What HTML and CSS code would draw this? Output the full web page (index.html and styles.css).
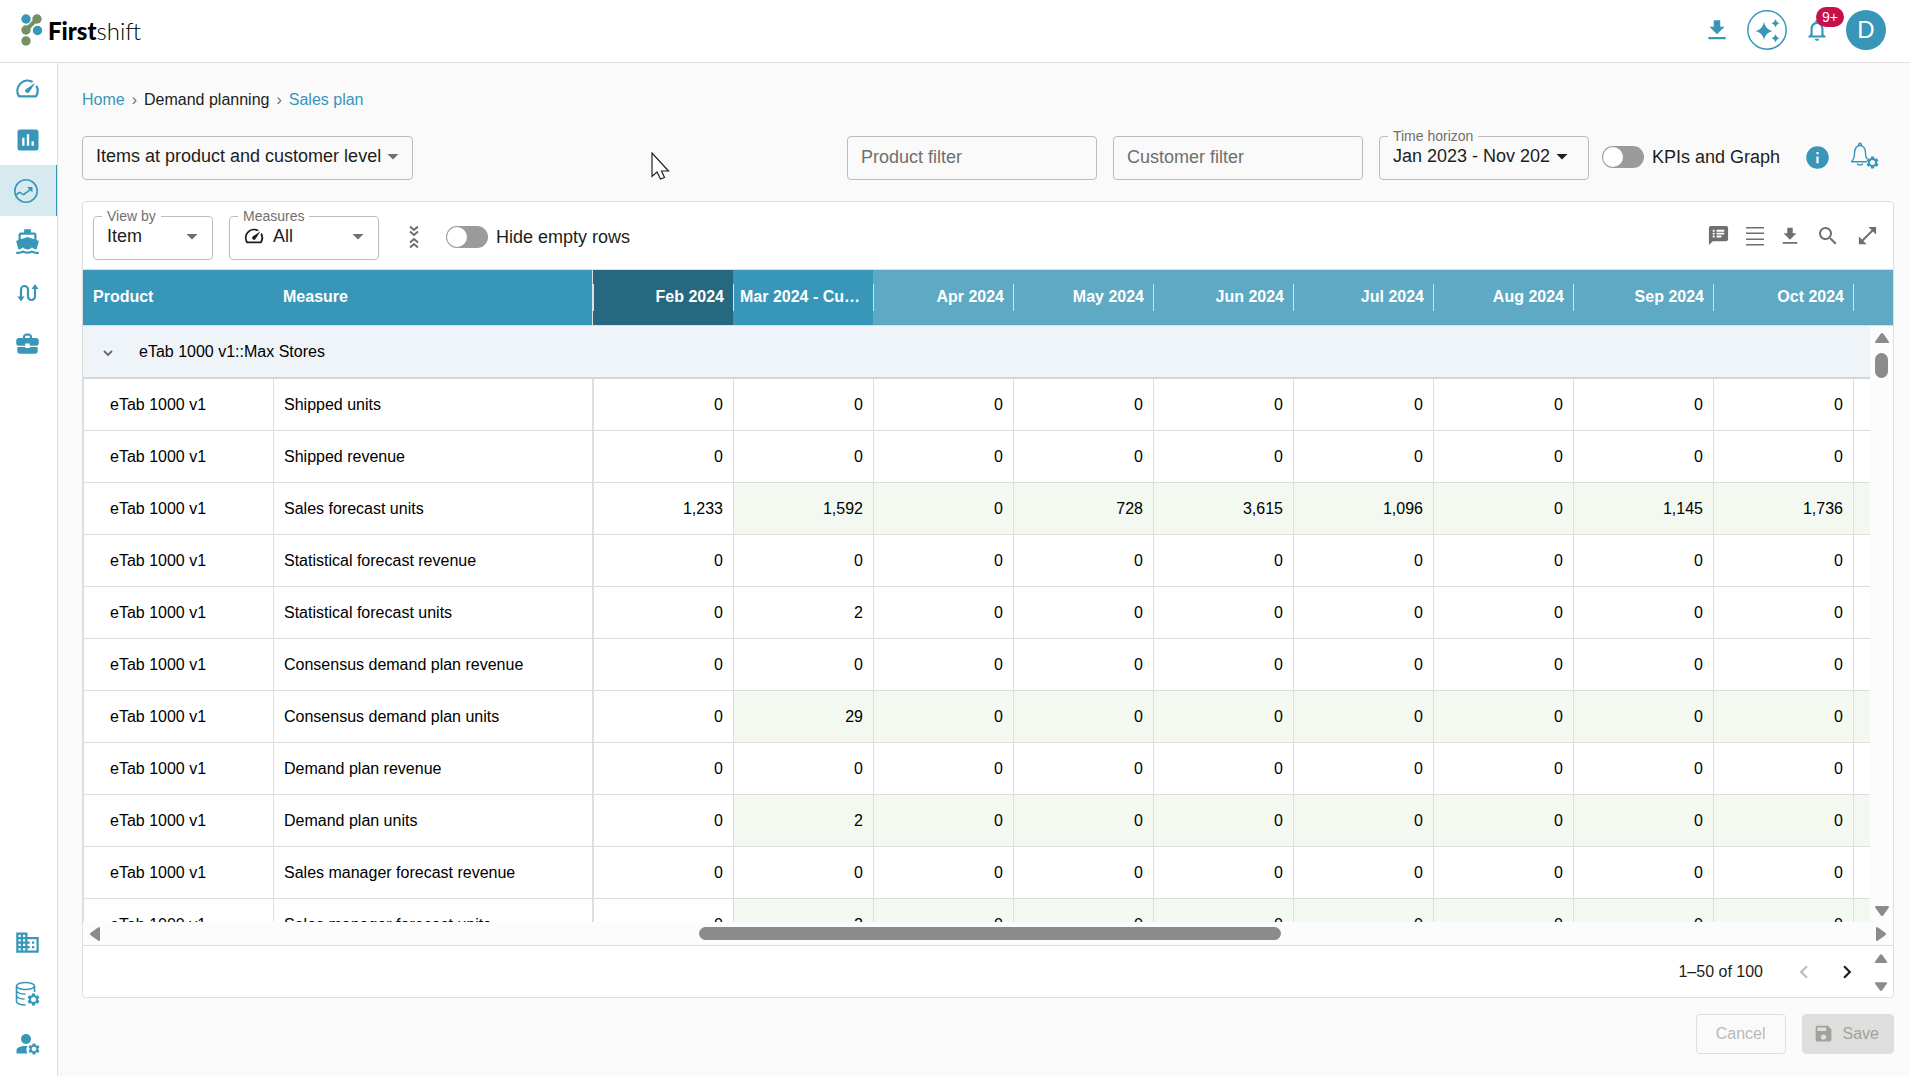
FILE: index.html
```
<!DOCTYPE html>
<html lang="en">
<head>
  <meta charset="UTF-8">
  <title>Firstshift - Sales plan</title>
  <link rel="stylesheet" href="styles.css">
</head>
<body>

  <!-- Shared icons -->
  <svg class="sprite" aria-hidden="true">
    <symbol id="i-speed" viewBox="0 0 24 24"><path d="M20.38 8.57l-1.23 1.85a8 8 0 0 1-.22 7.58H5.07A8 8 0 0 1 15.58 6.85l1.85-1.23A10 10 0 0 0 3.35 19a2 2 0 0 0 1.72 1h13.85a2 2 0 0 0 1.74-1 10 10 0 0 0-.27-10.44zm-9.79 6.84a2 2 0 0 0 2.83 0l5.66-8.49-8.49 5.66a2 2 0 0 0 0 2.83z"/></symbol>
    <symbol id="i-download" viewBox="0 0 24 24"><path d="M19 9h-4V3H9v6H5l7 7 7-7zM4 18.500v2h16v-2H4z"/></symbol>
    <symbol id="i-drop" viewBox="0 0 24 24"><path d="M6.500 10l5.500 5.500 5.500-5.500z"/></symbol>
    <symbol id="i-gear" viewBox="0 0 24 24"><path d="M19.14 12.94c.04-.3.06-.61.06-.94 0-.32-.02-.64-.07-.94l2.03-1.58c.18-.14.23-.41.12-.61l-1.92-3.32c-.12-.22-.37-.29-.59-.22l-2.39.96c-.5-.38-1.03-.7-1.62-.94l-.36-2.540c-.04-.24-.24-.41-.48-.41h-3.84c-.24 0-.43.17-.47.41l-.36 2.540c-.59.24-1.13.57-1.62.94l-2.390-.96c-.22-.08-.47 0-.59.22L2.740 8.870c-.12.21-.08.47.12.61l2.030 1.580c-.05.3-.09.63-.09.94s.02.64.07.94l-2.030 1.580c-.18.14-.23.41-.12.61l1.920 3.320c.12.22.37.29.59.22l2.390-.96c.5.38 1.030.7 1.620.94l.36 2.540c.05.24.24.41.48.41h3.840c.24 0 .44-.17.47-.41l.36-2.540c.59-.24 1.130-.56 1.620-.94l2.390.96c.22.08.47 0 .59-.22l1.920-3.320c.12-.22.07-.47-.12-.61l-2.010-1.580zM12 16a4 4 0 1 1 0-8 4 4 0 0 1 0 8z"/></symbol>
    <symbol id="i-tri" viewBox="0 0 16 12"><path d="M2.500 11Q0 11 1.500 9L6.500 2Q8 0 9.500 2L14.500 9Q16 11 13.500 11z"/></symbol>
  </svg>

  <header class="topbar">
    <a class="logo" href="#" aria-label="Firstshift">
      <svg width="22" height="32" viewBox="0 0 22 32">
        <path d="M5 16L16 5" stroke="#768f63" stroke-width="4"/>
        <circle cx="5" cy="5" r="4.700" fill="#3896b8"/>
        <circle cx="16" cy="5" r="4.700" fill="#768f63"/>
        <circle cx="5" cy="16" r="4.700" fill="#768f63"/>
        <circle cx="16.500" cy="16.500" r="4.700" fill="#3896b8"/>
        <circle cx="5" cy="27" r="4.700" fill="#768f63"/>
      </svg>
      <span class="logo-text"><b>First</b>shift</span>
    </a>
    <div class="top-actions">
      <button class="icon-btn download" aria-label="Downloads"><svg width="26" height="26"><use href="#i-download"/></svg></button>
      <button class="icon-btn ai" aria-label="Assistant">
        <svg width="40" height="40" viewBox="0 0 40 40">
          <circle cx="20" cy="20" r="19.200" fill="none" stroke="currentColor" stroke-width="1.500"/>
          <path d="M17 12q1.500 7.500 8.500 9-7 1.500-8.500 9-1.500-7.500-8.500-9 7-1.500 8.500-9zM28.500 9q.8 3.500 4.300 4.200-3.500.8-4.300 4.300-.8-3.500-4.300-4.300 3.500-.7 4.300-4.200zM28.500 24q.8 3.500 4.300 4.300-3.500.8-4.300 4.200-.8-3.400-4.300-4.200 3.500-.8 4.300-4.300z"/>
        </svg>
      </button>
      <button class="icon-btn bell" aria-label="Notifications">
        <svg width="26" height="26" viewBox="0 0 24 24"><path d="M12 22c1.100 0 2-.9 2-2h-4c0 1.100.9 2 2 2zm6-6v-5c0-3.070-1.630-5.640-4.500-6.320V4c0-.83-.67-1.500-1.500-1.500s-1.500.67-1.500 1.500v.68C7.640 5.360 6 7.920 6 11v5l-2 2v1h16v-1l-2-2zm-2 1H8v-6c0-2.480 1.510-4.500 4-4.500s4 2.020 4 4.500v6z"/></svg>
        <span class="badge">9+</span>
      </button>
      <button class="avatar">D</button>
    </div>
  </header>

  <div class="layout">
    <!-- Side navigation -->
    <nav class="sidebar">
      <a href="#" aria-label="Dashboard"><svg width="27" height="27"><use href="#i-speed"/></svg></a>
      <a href="#" aria-label="Reports"><svg width="28" height="28" viewBox="0 0 24 24"><path d="M19 3H5c-1.100 0-2 .9-2 2v14c0 1.100.9 2 2 2h14c1.100 0 2-.9 2-2V5c0-1.100-.9-2-2-2zM9 17H7v-7h2v7zm4 0h-2V7h2v10zm4 0h-2v-4h2v4z"/></svg></a>
      <a href="#" class="active" aria-label="Demand planning"><svg width="26" height="26" viewBox="0 0 26 26" fill="none" stroke="currentColor" stroke-width="1.600"><circle cx="13" cy="13" r="11.200"/><path d="M3 17.500c2.500-3.500 4-3.500 5.500-2s2.500 1.500 3.500 0 2.500-1 3.500-2.500l3-3.500"/><path d="M14 9h5.500v5.500z" fill="currentColor" stroke="none"/></svg></a>
      <a href="#" aria-label="Supply"><svg width="27" height="27" viewBox="0 0 24 24"><path d="M20 21c-1.390 0-2.780-.47-4-1.320-2.440 1.710-5.560 1.710-8 0C6.780 20.530 5.390 21 4 21H2v2h2c1.380 0 2.740-.35 4-.99 2.520 1.290 5.480 1.290 8 0 1.260.65 2.620.99 4 .99h2v-2h-2zM3.950 19H4c1.600 0 3.020-.88 4-2 .98 1.120 2.400 2 4 2s3.020-.88 4-2c.98 1.120 2.400 2 4 2h.05l1.890-6.680c.08-.26.06-.54-.06-.78s-.34-.42-.6-.5L20 10.620V6c0-1.100-.9-2-2-2h-3V1H9v3H6c-1.100 0-2 .9-2 2v4.620l-1.290.42c-.26.08-.48.26-.6.5s-.15.52-.06.78L3.950 19zM6 6h12v3.970L12 8 6 9.970V6z"/></svg></a>
      <a href="#" aria-label="Flow"><svg width="24" height="20" viewBox="0 0 24 20"><path d="M5 15V6.500a3.500 3.500 0 0 1 7 0v7a3.500 3.500 0 0 0 7 0V5" fill="none" stroke="currentColor" stroke-width="2.200"/><path d="M1.500 13.500h7L5 18.500zM15.500 6h7L19 1z"/></svg></a>
      <a href="#" aria-label="Business"><svg width="27" height="27" viewBox="0 0 24 24"><path d="M10 16v-1H3.010L3 19c0 1.110.89 2 2 2h14c1.110 0 2-.89 2-2v-4h-7v1h-4zm10-9h-4.010V5l-2-2h-4l-2 2v2H4c-1.100 0-2 .9-2 2v3c0 1.110.89 2 2 2h6v-2h4v2h6c1.100 0 2-.9 2-2V9c0-1.100-.9-2-2-2zm-6 0h-4V5h4v2z"/></svg></a>
      <div class="spacer"></div>
      <a href="#" aria-label="Company"><svg width="27" height="27" viewBox="0 0 24 24"><path d="M12 7V3H2v18h20V7H12zM6 19H4v-2h2v2zm0-4H4v-2h2v2zm0-4H4V9h2v2zm0-4H4V5h2v2zm4 12H8v-2h2v2zm0-4H8v-2h2v2zm0-4H8V9h2v2zm0-4H8V5h2v2zm10 12h-8v-2h2v-2h-2v-2h2v-2h-2V9h8v10zm-2-8h-2v2h2v-2zm0 4h-2v2h2v-2z"/></svg></a>
      <a href="#" aria-label="Data settings"><svg width="26" height="26" viewBox="0 0 26 26"><g fill="none" stroke="currentColor" stroke-width="1.600"><ellipse cx="10.500" cy="5" rx="9" ry="3.500"/><path d="M1.500 5v15.500c0 2 4 3.500 9 3.500M19.500 5v6M1.500 10c1 2 5 3 9 3M1.500 15c1 2 4 3 8 3"/></g><use href="#i-gear" x="11" y="11" width="15" height="15"/></svg></a>
      <a href="#" aria-label="User settings"><svg width="26" height="26" viewBox="0 0 26 26"><circle cx="11" cy="7" r="5"/><path d="M1.500 21.500v-3c0-3.500 5-5 11-4.500-1.500 2-1.500 5 0 7.500z"/><use href="#i-gear" x="12" y="10" width="14" height="14"/></svg></a>
    </nav>

    <main class="content">
      <nav class="breadcrumb">
        <a href="#">Home</a><span class="sep">›</span><span>Demand planning</span><span class="sep">›</span><a href="#">Sales plan</a>
      </nav>

      <div class="filters">
        <button class="field level">Items at product and customer level<svg class="caret" width="24" height="24"><use href="#i-drop"/></svg></button>
        <div class="spacer"></div>
        <input class="field filter" type="text" placeholder="Product filter" aria-label="Product filter">
        <input class="field filter" type="text" placeholder="Customer filter" aria-label="Customer filter">
        <fieldset class="field horizon">
          <legend>Time horizon</legend>
          <button><span>Jan 2023 - Nov 202</span><svg width="24" height="24"><use href="#i-drop"/></svg></button>
        </fieldset>
        <label class="switch kpis"><input type="checkbox">KPIs and Graph</label>
        <button class="icon-btn info" aria-label="Info"><svg width="27" height="27" viewBox="0 0 24 24"><path d="M12 2a10 10 0 1 0 0 20 10 10 0 0 0 0-20zm1 15h-2v-6h2v6zm0-8h-2V7h2v2z"/></svg></button>
        <button class="icon-btn alerts" aria-label="Alert settings"><svg width="30" height="28" viewBox="0 0 30 28"><g fill="none" stroke="currentColor" stroke-width="1.400"><path d="M1.500 19.500c2.500-2 3-4 3-8.500 0-4 2-7.500 5.500-7.500s5.500 3.500 5.500 7.500c0 2.500.3 4.500 1.500 6M1 19.800h16M8.500 3.500c0-3 3-3 3 0M7 21.500c1 2 5 2 6 0"/></g><use href="#i-gear" x="15" y="13" width="15" height="15"/></svg></button>
      </div>

      <section class="card">
        <div class="toolbar">
          <fieldset class="field view-by">
            <legend>View by</legend>
            <button>Item<svg class="caret" width="24" height="24"><use href="#i-drop"/></svg></button>
          </fieldset>
          <fieldset class="field measures">
            <legend>Measures</legend>
            <button><svg class="lead" width="22" height="22"><use href="#i-speed"/></svg>All<svg class="caret" width="24" height="24"><use href="#i-drop"/></svg></button>
          </fieldset>
          <button class="icon-btn grey collapse" aria-label="Collapse rows"><svg width="10" height="24" viewBox="0 0 10 24" fill="none" stroke="currentColor" stroke-width="2"><path d="M1 1.500l4 3.500 4-3.500M1 6.500L5 10l4-3.500M1 17.500L5 14l4 3.500M1 22.500L5 19l4 3.500"/></svg></button>
          <label class="switch"><input type="checkbox">Hide empty rows</label>
          <div class="spacer"></div>
          <div class="tools">
            <button class="icon-btn grey" aria-label="Comments"><svg width="23" height="23" viewBox="0 0 24 24"><path d="M20 2H4c-1.100 0-2 .9-2 2v18l4-4h14c1.100 0 2-.9 2-2V4c0-1.100-.9-2-2-2zM8 14H6v-2h2v2zm0-3H6V9h2v2zm0-3H6V6h2v2zm7 6h-5v-2h5v2zm3-3h-8V9h8v2zm0-3h-8V6h8v2z"/></svg></button>
            <button class="icon-btn grey" aria-label="Density"><svg width="18" height="20" viewBox="0 0 18 20"><path d="M0 1h18v1.500H0zM0 6.500h18V8H0zM0 12.500h18V14H0zM0 18h18v1.500H0z"/></svg></button>
            <button class="icon-btn grey" aria-label="Export"><svg width="20" height="22" viewBox="2 0 20 24"><use href="#i-download" width="24" height="24"/></svg></button>
            <button class="icon-btn grey" aria-label="Search"><svg width="24" height="24" viewBox="0 0 24 24"><path d="M15.500 14h-.79l-.28-.27A6.500 6.500 0 1 0 13.730 14.430l.27.28v.79l5 4.990L20.490 19l-4.990-5zm-6 0a4.500 4.500 0 1 1 0-9 4.500 4.500 0 0 1 0 9z"/></svg></button>
            <button class="icon-btn grey" aria-label="Full screen"><svg width="23" height="23" viewBox="0 0 24 24"><path d="M21 11V3h-8l3.290 3.290-10 10L3 13v8h8l-3.290-3.290 10-10z"/></svg></button>
          </div>
        </div>

        <div class="grid-wrap">
          <table class="grid">
            <colgroup>
              <col class="c-product"><col class="c-measure">
              <col span="9" class="c-month"><col>
            </colgroup>
            <thead>
              <tr>
                <th>Product</th>
                <th class="frozen-end">Measure</th>
                <th class="month past">Feb 2024</th>
                <th class="month current">Mar 2024 - Cu…</th>
                <th class="month">Apr 2024</th>
                <th class="month">May 2024</th>
                <th class="month">Jun 2024</th>
                <th class="month">Jul 2024</th>
                <th class="month">Aug 2024</th>
                <th class="month">Sep 2024</th>
                <th class="month">Oct 2024</th>
                <th class="month"></th>
              </tr>
            </thead>
            <tbody id="rows">
              <tr class="group">
                <td colspan="12"><button aria-label="Collapse group"><svg width="10" height="8" viewBox="0 0 10 8"><path d="M1 2l4 4 4-4" fill="none" stroke="#666" stroke-width="1.800"/></svg></button>eTab 1000 v1::Max Stores</td>
              </tr>
            </tbody>
          </table>
          <div class="vscroll">
            <svg width="16" height="12"><use href="#i-tri"/></svg>
            <span class="thumb"></span>
            <svg class="down" width="16" height="12"><use href="#i-tri"/></svg>
          </div>
        </div>

        <div class="hscroll">
          <svg class="left" width="16" height="12"><use href="#i-tri"/></svg>
          <div class="track"><div class="thumb"></div></div>
          <svg class="right" width="16" height="12"><use href="#i-tri"/></svg>
        </div>

        <div class="pager">
          <span class="count">1–50 of 100</span>
          <button class="page-btn" disabled aria-label="Previous page"><svg width="26" height="26" viewBox="0 0 24 24"><path d="M15.410 7.410L14 6l-6 6 6 6 1.410-1.410L10.830 12z"/></svg></button>
          <button class="page-btn" aria-label="Next page"><svg width="26" height="26" viewBox="0 0 24 24"><path d="M10 6L8.590 7.410 13.170 12l-4.580 4.590L10 18l6-6z"/></svg></button>
          <div class="mini-scroll">
            <svg width="14" height="11"><use href="#i-tri"/></svg>
            <svg class="down" width="14" height="11"><use href="#i-tri"/></svg>
          </div>
        </div>
      </section>

      <div class="actions">
        <button class="btn cancel" disabled>Cancel</button>
        <button class="btn save" disabled><svg width="21" height="21" viewBox="0 0 24 24"><path d="M17 3H5a2 2 0 0 0-2 2v14a2 2 0 0 0 2 2h14c1.100 0 2-.9 2-2V7l-4-4zm-5 16a3 3 0 1 1 0-6 3 3 0 0 1 0 6zm3-10H5V5h10v4z"/></svg>Save</button>
      </div>
    </main>
  </div>

  <!-- Mouse pointer -->
  <svg class="pointer" width="20" height="28" viewBox="0 0 20 28"><path d="M1 1v23.500l5-4.500 3.500 7 4-1.500-3-6.500h7z" fill="#fff" stroke="#222" stroke-width="1.200"/></svg>

  <script>
    // name, editable, values from Feb to Oct
    const measures = [
      ['Shipped units', false, [0, 0, 0, 0, 0, 0, 0, 0, 0]],
      ['Shipped revenue', false, [0, 0, 0, 0, 0, 0, 0, 0, 0]],
      ['Sales forecast units', true, [1233, 1592, 0, 728, 3615, 1096, 0, 1145, 1736]],
      ['Statistical forecast revenue', false, [0, 0, 0, 0, 0, 0, 0, 0, 0]],
      ['Statistical forecast units', false, [0, 2, 0, 0, 0, 0, 0, 0, 0]],
      ['Consensus demand plan revenue', false, [0, 0, 0, 0, 0, 0, 0, 0, 0]],
      ['Consensus demand plan units', true, [0, 29, 0, 0, 0, 0, 0, 0, 0]],
      ['Demand plan revenue', false, [0, 0, 0, 0, 0, 0, 0, 0, 0]],
      ['Demand plan units', true, [0, 2, 0, 0, 0, 0, 0, 0, 0]],
      ['Sales manager forecast revenue', false, [0, 0, 0, 0, 0, 0, 0, 0, 0]],
      ['Sales manager forecast units', true, [0, 2, 0, 0, 0, 0, 0, 0, 0]]
    ];

    let html = '';
    measures.forEach(([name, editable, values]) => {
      html += `<tr class="${editable ? 'editable' : ''}">
                 <td class="product">eTab 1000 v1</td>
                 <td class="frozen-end">${name}</td>
                 ${values.map(v => `<td class="num">${v.toLocaleString('en-US')}</td>`).join('')}
                 <td class="num"></td>
               </tr>`;
    });
    document.getElementById('rows').insertAdjacentHTML('beforeend', html);
  </script>
</body>
</html>
```

FILE: styles.css
```
* {
  box-sizing: border-box;
}

body {
  margin: 0;
  height: 100vh;
  overflow: hidden;
  display: flex;
  flex-direction: column;
  background: #fafafa;
  color: #1d1d1b;
  font-family: "Liberation Sans", Arial, sans-serif;
  font-size: 16px;
}

button, input {
  font: inherit;
  color: inherit;
}

button {
  background: none;
  border: none;
  padding: 0;
  cursor: pointer;
}

a {
  color: #3896b8;
  text-decoration: none;
}

svg {
  display: block;
  flex-shrink: 0;
}

svg:not([fill]) {
  fill: currentColor;
}

.sprite {
  display: none;
}

.spacer {
  flex: 1;
}

.icon-btn {
  display: flex;
  color: #3896b8;
}

.icon-btn.grey {
  color: #6f6f6e;
}

/* top bar */
.topbar {
  height: 63px;
  flex-shrink: 0;
  display: flex;
  align-items: center;
  justify-content: space-between;
  padding: 0 24px 2px 21px;
  background: #fff;
  border-bottom: 1px solid #dededd;
}

.logo {
  display: flex;
  align-items: center;
  gap: 5px;
  color: #000;
}

.logo-text {
  font-family: Lato, sans-serif;
  font-size: 24px;
  font-weight: 300;
}

.logo-text b {
  font-weight: 900;
}

.top-actions {
  display: flex;
  align-items: center;
}

.ai {
  margin: 0 17px;
}

.bell {
  position: relative;
  margin-right: 16px;
}

.badge {
  position: absolute;
  top: -10px;
  left: 12px;
  padding: 0 6px;
  border-radius: 10px;
  background: #c8104c;
  color: #fff;
  font-size: 14px;
  line-height: 20px;
}

.avatar {
  width: 40px;
  height: 40px;
  border-radius: 50%;
  background: #3896b8;
  color: #fff;
  font-size: 24px;
}

/* sidebar */
.layout {
  flex: 1;
  min-height: 0;
  display: flex;
}

.sidebar {
  width: 58px;
  flex-shrink: 0;
  display: flex;
  flex-direction: column;
  padding-bottom: 6px;
  background: #fff;
  border-right: 1px solid #dededd;
}

.sidebar a {
  height: 51px;
  display: flex;
  align-items: center;
  justify-content: center;
  padding-right: 2px;
}

.sidebar a.active {
  padding-right: 4px;
  background: #d7eaf0;
  border-right: 1px solid #3896b8;
}

/* page content */
.content {
  flex: 1;
  min-width: 0;
  display: flex;
  flex-direction: column;
  padding: 27px 16px 22px 24px;
}

.breadcrumb {
  display: flex;
  line-height: 20px;
}

.sep {
  margin: 0 7px;
  color: #6f6f6e;
}

.filters {
  display: flex;
  align-items: flex-end;
  height: 52px;
  margin: 18px 0 21px;
  flex-shrink: 0;
}

.field {
  height: 44px;
  margin: 0;
  border: 1px solid #bdbdbc;
  border-radius: 4px;
  background: none;
  font-size: 18px;
}

.level {
  display: flex;
  align-items: center;
  padding: 0 7px 4px 13px;
}

.caret {
  color: #6f6f6e;
}

.filter {
  width: 250px;
  margin-right: 16px;
  padding: 0 13px 2px;
}

.filter::placeholder {
  color: #6f6f6e;
  opacity: 1;
}

fieldset.field {
  height: 52px;
  min-width: 0;
  padding: 0 8px 0 13px;
}

fieldset.field legend {
  margin-left: -5px;
  padding: 0 5px;
  color: #6f6f6e;
  font-size: 14px;
  line-height: 16px;
}

fieldset.field button {
  width: 100%;
  height: 24px;
  display: flex;
  align-items: center;
}

fieldset.field button .caret {
  margin-left: auto;
}

.horizon {
  width: 210px;
}

.switch {
  display: flex;
  align-items: center;
  gap: 8px;
  font-size: 18px;
}

.switch input {
  appearance: none;
  width: 42px;
  height: 22px;
  margin: 0;
  border-radius: 11px;
  background: #9b9b9a;
}

.switch input::before {
  content: "";
  display: block;
  width: 20px;
  height: 20px;
  margin: 1px;
  border-radius: 50%;
  background: #fff;
}

.switch input:checked::before {
  margin-left: 21px;
}

.kpis {
  height: 46px;
  margin-left: 13px;
}

.info {
  margin: 0 19px 9px 24px;
}

.alerts {
  margin: 0 14px 10px 0;
}

/* table card */
.card {
  flex: 1;
  min-height: 0;
  display: flex;
  flex-direction: column;
  background: #fff;
  border: 1px solid #dededd;
  border-radius: 4px;
}

.toolbar {
  display: flex;
  align-items: center;
  height: 68px;
  flex-shrink: 0;
  padding: 0 14px 3px 10px;
  border-bottom: 1px solid #dededd;
}

.view-by {
  width: 120px;
}

.measures {
  width: 150px;
  margin-left: 16px;
}

.toolbar .lead {
  margin-right: 8px;
}

.collapse {
  margin: 6px 27px 0 30px;
}

.toolbar .switch {
  margin-top: 6px;
}

.tools {
  display: flex;
  align-items: center;
  gap: 16px;
  margin-top: 3px;
}

.grid-wrap {
  position: relative;
  flex: 1;
  min-height: 0;
  overflow: hidden;
}

.grid {
  width: 100%;
  table-layout: fixed;
  border-collapse: separate;
  border-spacing: 0;
  color: #000;
}

.c-product {
  width: 190px;
}

.c-measure {
  width: 320px;
}

.c-month {
  width: 140px;
}

.grid th {
  position: relative;
  height: 56px;
  padding: 0 10px 2px;
  border-bottom: 1px solid #dededd;
  background: #3896b8;
  color: #fff;
  text-align: left;
}

.grid th.month {
  padding-right: 9px;
  background: #5ea9c3;
  text-align: right;
}

.grid th.past {
  background: #26687f;
}

.grid th.current {
  padding: 0 7px 2px;
  background: #3896b8;
  text-align: left;
  white-space: nowrap;
}

/* short divider between month headers */
.grid th.month::before {
  content: "";
  position: absolute;
  left: 0;
  top: 14px;
  width: 1px;
  height: 27px;
  background: #dededd;
}

.grid td {
  height: 52px;
  padding: 1px 10px 0;
  border-left: 1px solid #dededd;
  border-bottom: 1px solid #dededd;
}

.grid .frozen-end {
  border-right: 1px solid #dededd;
}

.grid td.product {
  padding-left: 26px;
}

.grid td.num {
  text-align: right;
}

.grid .past {
  background: #26687f;
}

.editable td.num:nth-child(n+4) {
  background: #f3f8f1;
}

.grid .group td {
  height: 53px;
  padding-left: 20px;
  background: #eff4f9;
  border-left: none;
  border-bottom: 2px solid #d4d7da;
}

.group button {
  margin-right: 26px;
  vertical-align: middle;
}

/* scrollbars */
.vscroll {
  position: absolute;
  top: 56px;
  right: 0;
  bottom: 0;
  width: 23px;
  display: flex;
  flex-direction: column;
  align-items: center;
  gap: 9px;
  padding: 6px 0 5px;
  background: #fcfcfc;
  color: #8b8b8b;
}

.vscroll .thumb {
  width: 13px;
  height: 25px;
  border-radius: 7px;
  background: #8b8b8b;
}

.down {
  transform: rotate(180deg);
}

.vscroll .down {
  margin-top: auto;
}

.hscroll {
  display: flex;
  align-items: center;
  height: 24px;
  flex-shrink: 0;
  padding: 0 4px;
  background: #fcfcfc;
  border-bottom: 1px solid #dededd;
  color: #8b8b8b;
}

.hscroll .left {
  transform: rotate(-90deg);
}

.hscroll .right {
  transform: rotate(90deg);
}

.hscroll .track {
  flex: 1;
  display: flex;
  justify-content: center;
  padding-left: 4px;
}

.hscroll .thumb {
  width: 33%;
  height: 13px;
  border-radius: 7px;
  background: #8b8b8b;
}

.pager {
  display: flex;
  align-items: center;
  justify-content: flex-end;
  height: 51px;
  flex-shrink: 0;
}

.count {
  margin-right: 28px;
}

.page-btn {
  margin-right: 17px;
}

.page-btn + .page-btn {
  margin-right: 14px;
}

.page-btn:disabled {
  color: #bdbdbc;
}

.mini-scroll {
  height: 100%;
  display: flex;
  flex-direction: column;
  justify-content: space-between;
  padding: 7px 5px 5px 0;
  color: #8b8b8b;
}

/* bottom buttons */
.actions {
  display: flex;
  justify-content: flex-end;
  gap: 16px;
  margin-top: 16px;
}

.btn {
  display: flex;
  align-items: center;
  justify-content: center;
  gap: 9px;
  height: 40px;
  padding: 0 19px 1px;
  border: 1px solid #dededd;
  border-radius: 4px;
  color: #b9b9b7;
}

.save {
  padding: 0 14px 1px 10px;
  background: #dededc;
  color: #a1a1a0;
}

.pointer {
  position: absolute;
  top: 152px;
  left: 651px;
}
```
